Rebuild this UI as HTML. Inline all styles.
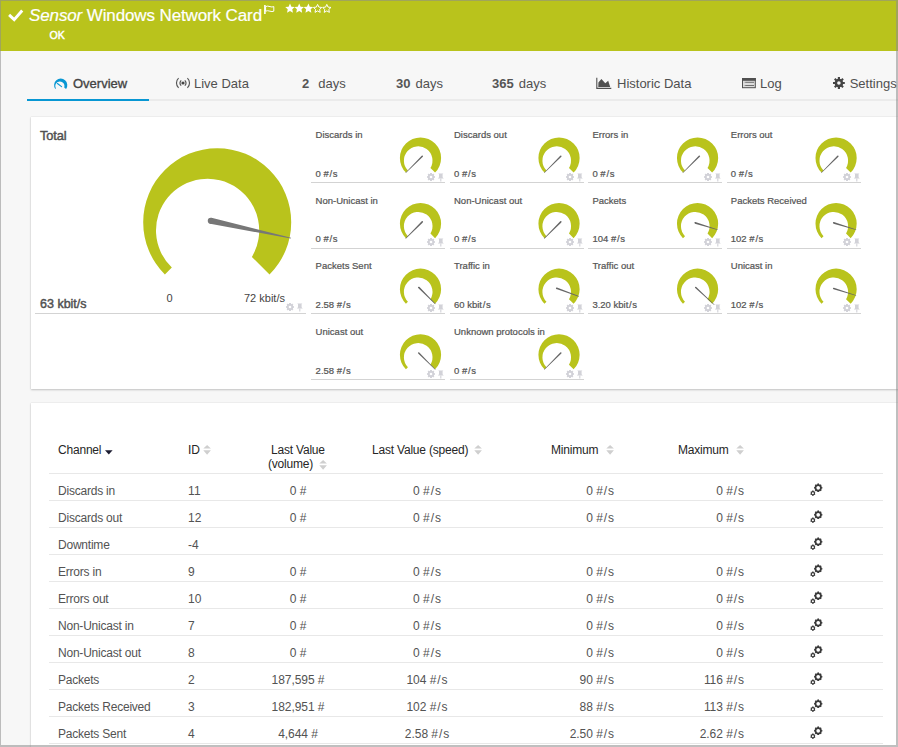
<!DOCTYPE html>
<html><head><meta charset="utf-8"><style>
*{margin:0;padding:0;box-sizing:border-box}
html,body{width:898px;height:747px;overflow:hidden;background:#f7f7f7;font-family:"Liberation Sans",sans-serif}
body{position:relative}
.a{position:absolute;white-space:nowrap;line-height:1}
#frame{position:absolute;left:0;top:0;width:898px;height:747px;border:1px solid rgba(140,140,140,0.56);border-right-width:2px;border-bottom-width:2px;z-index:50}
#hdr{position:absolute;left:0;top:0;width:898px;height:51px;background:#b9c31c}
.tab{font-size:13px;color:#505050}
.panel{position:absolute;background:#fff;box-shadow:0 1px 2px rgba(0,0,0,0.2),0 0 1px rgba(0,0,0,0.16)}
.tl{font-size:9.5px;color:#555;-webkit-text-stroke:0.22px #555}
.hr{position:absolute;height:1px;background:#d3d3d3}
.th{font-size:12px;color:#262626;letter-spacing:-0.2px}
.td{font-size:12px;color:#535353;letter-spacing:-0.22px}
.rl{position:absolute;left:49px;width:834px;height:1px;background:#e8e8e8}
</style></head><body>
<div id="hdr"></div>
<svg class="a" style="left:8px;top:9px" width="16" height="13" viewBox="0 0 16 13"><path d="M1.1 5.9 L6.2 10.6 L14.2 1.5" fill="none" stroke="#fff" stroke-width="2.9"/></svg>
<div class="a" style="left:29px;top:6.6px;font-size:17px;color:#fff;letter-spacing:-0.12px;-webkit-text-stroke:0.2px #fff"><i>Sensor</i> Windows Network Card</div>
<svg class="a" style="left:263px;top:4px" width="13" height="11" viewBox="0 0 13 11"><path d="M1.9 1 V10" stroke="#fff" stroke-width="1.6"/><path d="M2.6 2.6 Q4.5 1.6 7 2.6 Q9 3.4 10.8 2.6 V7.2 Q9 8 7 7.2 Q4.5 6.2 2.6 7.2 Z" fill="none" stroke="#fff" stroke-width="1"/></svg>
<svg class="a" style="left:285px;top:3px" width="48" height="11" viewBox="0 0 48 11"><polygon points="5.00,0.60 6.41,3.66 9.76,4.05 7.28,6.34 7.94,9.65 5.00,8.00 2.06,9.65 2.72,6.34 0.24,4.05 3.59,3.66" fill="#fff"/><polygon points="14.20,0.60 15.61,3.66 18.96,4.05 16.48,6.34 17.14,9.65 14.20,8.00 11.26,9.65 11.92,6.34 9.44,4.05 12.79,3.66" fill="#fff"/><polygon points="23.40,0.60 24.81,3.66 28.16,4.05 25.68,6.34 26.34,9.65 23.40,8.00 20.46,9.65 21.12,6.34 18.64,4.05 21.99,3.66" fill="#fff"/><polygon points="32.60,1.40 33.83,4.10 36.78,4.44 34.60,6.45 35.19,9.36 32.60,7.90 30.01,9.36 30.60,6.45 28.42,4.44 31.37,4.10" fill="none" stroke="#fff" stroke-width="1"/><polygon points="41.80,1.40 43.03,4.10 45.98,4.44 43.80,6.45 44.39,9.36 41.80,7.90 39.21,9.36 39.80,6.45 37.62,4.44 40.57,4.10" fill="none" stroke="#fff" stroke-width="1"/></svg>
<div class="a" style="left:49.5px;top:30px;font-size:10.6px;color:#fff;-webkit-text-stroke:0.45px #fff">OK</div>
<div class="a" style="left:27px;top:99px;width:871px;height:2px;background:#ebebeb"></div>
<div class="a" style="left:27px;top:99px;width:122px;height:2px;background:#0897d3"></div>
<div class="a tab" style="left:73px;top:77px;color:#444;-webkit-text-stroke:0.35px #444">Overview</div>
<svg class="a" style="left:175px;top:77px" width="16" height="12" viewBox="0 0 16 12"><circle cx="8" cy="6" r="1.6" fill="#444"/><path d="M6.2 3.3 A4 4 0 0 0 6.2 8.7 M9.8 3.3 A4 4 0 0 1 9.8 8.7 M3.6 1.2 A6.5 6.5 0 0 0 3.6 10.8 M12.4 1.2 A6.5 6.5 0 0 1 12.4 10.8" fill="none" stroke="#555" stroke-width="1.15"/></svg>
<div class="a tab" style="left:194px;top:77px">Live Data</div>
<div class="a tab" style="left:302px;top:77px"><b style="color:#555">2</b><span style="margin-left:9px">days</span></div>
<div class="a tab" style="left:396px;top:77px"><b style="color:#555">30</b><span style="margin-left:5px">days</span></div>
<div class="a tab" style="left:492px;top:77px"><b style="color:#555">365</b><span style="margin-left:5px">days</span></div>
<svg class="a" style="left:596px;top:77px" width="16" height="12" viewBox="0 0 16 12"><path d="M0.8 0.8 V11.4 H15.3" fill="none" stroke="#505050" stroke-width="1.1"/><path d="M2.3 9.9 L2.4 5.6 L5.4 1.9 L9.3 6.2 L12.2 3.8 L14.2 9.9 Z" fill="#505050"/></svg>
<div class="a tab" style="left:617px;top:77px">Historic Data</div>
<svg class="a" style="left:742px;top:77px" width="14" height="12" viewBox="0 0 14 12"><rect x="0.5" y="1.5" width="12.8" height="9.2" fill="#ddd" stroke="#505050" stroke-width="1"/><rect x="0" y="1" width="13.8" height="2.8" fill="#505050"/><path d="M3.2 5.3 H12 M3.2 8.5 H12" stroke="#707070" stroke-width="1"/><path d="M1.9 5.3 H2.5 M1.9 8.5 H2.5" stroke="#999" stroke-width="1"/></svg>
<div class="a tab" style="left:760px;top:77px">Log</div>
<svg class="a" style="left:832px;top:76px" width="14" height="14" viewBox="0 0 14 14"><circle cx="6.90" cy="7.00" r="4.30" fill="#444"/><rect x="5.90" y="1.10" width="2.00" height="11.80" fill="#444" transform="rotate(0.0 6.90 7.00)"/><rect x="5.90" y="1.10" width="2.00" height="11.80" fill="#444" transform="rotate(45.0 6.90 7.00)"/><rect x="5.90" y="1.10" width="2.00" height="11.80" fill="#444" transform="rotate(90.0 6.90 7.00)"/><rect x="5.90" y="1.10" width="2.00" height="11.80" fill="#444" transform="rotate(135.0 6.90 7.00)"/><rect x="5.90" y="1.10" width="2.00" height="11.80" fill="#444" transform="rotate(180.0 6.90 7.00)"/><circle cx="6.90" cy="7.00" r="1.80" fill="#f7f7f7"/></svg>
<div class="a tab" style="left:849.7px;top:77px">Settings</div>
<div class="panel" style="left:31px;top:117px;width:880px;height:272px"></div>
<svg class="a" style="left:0;top:0" width="898" height="747"><path d="M55.29 88.99 A6.60 6.60 0 1 1 66.11 88.99 L64.34 87.75 A4.70 4.70 0 1 0 55.85 88.59 Z" fill="#0897d3"/><path d="M57.4 83.5 L61.6 86.6" stroke="#0897d3" stroke-width="1.1" stroke-linecap="round"/></svg>
<svg class="a" style="left:0;top:0" width="898" height="747"><path d="M164.87 274.53 A74.00 74.00 0 1 1 269.53 274.53 L251.88 256.88 A51.60 51.60 0 1 0 171.82 267.58 Z" fill="#b9c31c"/><path d="M210.19 223.86 L290.80 238.57 L290.99 237.69 L211.50 217.80 Z M210.85 220.83 m-3.10 0 a3.10 3.10 0 1 0 6.20 0 a3.10 3.10 0 1 0 -6.20 0" fill="#777"/></svg>
<div class="a" style="left:40px;top:130px;font-size:12.8px;color:#505050;-webkit-text-stroke:0.45px #505050;letter-spacing:-0.1px">Total</div>
<div class="a" style="left:40px;top:297.6px;font-size:12.5px;color:#505050;-webkit-text-stroke:0.45px #505050;letter-spacing:0px">63 kbit/s</div>
<div class="a" style="left:166.5px;top:292.5px;font-size:11px;color:#444">0</div>
<div class="a" style="left:244px;top:292.5px;font-size:11px;color:#444">72 kbit/s</div>
<div class="hr" style="left:35px;top:313px;width:271px"></div>
<svg class="a" style="left:285.5px;top:302.5px" width="18" height="9" viewBox="0 0 18 9"><circle cx="4.00" cy="4.00" r="3.20" fill="#d2d2d8"/><rect x="3.20" y="0.00" width="1.60" height="8.00" fill="#d2d2d8" transform="rotate(0.0 4.00 4.00)"/><rect x="3.20" y="0.00" width="1.60" height="8.00" fill="#d2d2d8" transform="rotate(45.0 4.00 4.00)"/><rect x="3.20" y="0.00" width="1.60" height="8.00" fill="#d2d2d8" transform="rotate(90.0 4.00 4.00)"/><rect x="3.20" y="0.00" width="1.60" height="8.00" fill="#d2d2d8" transform="rotate(135.0 4.00 4.00)"/><rect x="3.20" y="0.00" width="1.60" height="8.00" fill="#d2d2d8" transform="rotate(180.0 4.00 4.00)"/><circle cx="4.00" cy="4.00" r="1.30" fill="#fff"/><path d="M11.2 0.5 H16.4 L15.6 1.2 V4.2 L16.8 5.6 H10.8 L12 4.2 V1.2 Z" fill="#d2d2d8"/><path d="M13.8 5.5 V8.5" stroke="#d2d2d8" stroke-width="1.1"/></svg>
<svg class="a" style="left:0;top:0" width="898" height="747"><path d="M405.93 172.57 A20.60 20.60 0 1 1 435.07 172.57 L430.46 167.96 A14.30 14.30 0 1 0 407.94 170.56 Z" fill="#b9c31c"/><path d="M421.70 155.67 L405.44 172.64 L405.86 173.06 L422.83 156.80 Z M422.27 156.23 m-0.80 0 a0.80 0.80 0 1 0 1.60 0 a0.80 0.80 0 1 0 -1.60 0" fill="#666"/><path d="M544.46 172.57 A20.60 20.60 0 1 1 573.60 172.57 L568.99 167.96 A14.30 14.30 0 1 0 546.47 170.56 Z" fill="#b9c31c"/><path d="M560.23 155.67 L543.97 172.64 L544.39 173.06 L561.36 156.80 Z M560.80 156.23 m-0.80 0 a0.80 0.80 0 1 0 1.60 0 a0.80 0.80 0 1 0 -1.60 0" fill="#666"/><path d="M682.99 172.57 A20.60 20.60 0 1 1 712.13 172.57 L707.52 167.96 A14.30 14.30 0 1 0 685.00 170.56 Z" fill="#b9c31c"/><path d="M698.76 155.67 L682.50 172.64 L682.92 173.06 L699.89 156.80 Z M699.33 156.23 m-0.80 0 a0.80 0.80 0 1 0 1.60 0 a0.80 0.80 0 1 0 -1.60 0" fill="#666"/><path d="M821.52 172.57 A20.60 20.60 0 1 1 850.66 172.57 L846.05 167.96 A14.30 14.30 0 1 0 823.53 170.56 Z" fill="#b9c31c"/><path d="M837.29 155.67 L821.03 172.64 L821.45 173.06 L838.42 156.80 Z M837.86 156.23 m-0.80 0 a0.80 0.80 0 1 0 1.60 0 a0.80 0.80 0 1 0 -1.60 0" fill="#666"/><path d="M405.93 238.17 A20.60 20.60 0 1 1 435.07 238.17 L430.46 233.56 A14.30 14.30 0 1 0 407.94 236.16 Z" fill="#b9c31c"/><path d="M421.70 221.27 L405.44 238.24 L405.86 238.66 L422.83 222.40 Z M422.27 221.83 m-0.80 0 a0.80 0.80 0 1 0 1.60 0 a0.80 0.80 0 1 0 -1.60 0" fill="#666"/><path d="M544.46 238.17 A20.60 20.60 0 1 1 573.60 238.17 L568.99 233.56 A14.30 14.30 0 1 0 546.47 236.16 Z" fill="#b9c31c"/><path d="M560.23 221.27 L543.97 238.24 L544.39 238.66 L561.36 222.40 Z M560.80 221.83 m-0.80 0 a0.80 0.80 0 1 0 1.60 0 a0.80 0.80 0 1 0 -1.60 0" fill="#666"/><path d="M682.99 238.17 A20.60 20.60 0 1 1 712.13 238.17 L707.52 233.56 A14.30 14.30 0 1 0 685.00 236.16 Z" fill="#b9c31c"/><path d="M694.94 223.63 L717.55 230.03 L717.73 229.45 L695.40 222.10 Z M695.17 222.87 m-0.80 0 a0.80 0.80 0 1 0 1.60 0 a0.80 0.80 0 1 0 -1.60 0" fill="#666"/><path d="M821.52 238.17 A20.60 20.60 0 1 1 850.66 238.17 L846.05 233.56 A14.30 14.30 0 1 0 823.53 236.16 Z" fill="#b9c31c"/><path d="M833.47 223.63 L856.08 230.03 L856.26 229.45 L833.93 222.10 Z M833.70 222.87 m-0.80 0 a0.80 0.80 0 1 0 1.60 0 a0.80 0.80 0 1 0 -1.60 0" fill="#666"/><path d="M405.93 303.77 A20.60 20.60 0 1 1 435.07 303.77 L430.46 299.16 A14.30 14.30 0 1 0 407.94 301.76 Z" fill="#b9c31c"/><path d="M418.17 288.00 L435.14 304.26 L435.56 303.84 L419.30 286.87 Z M418.73 287.43 m-0.80 0 a0.80 0.80 0 1 0 1.60 0 a0.80 0.80 0 1 0 -1.60 0" fill="#666"/><path d="M544.46 303.77 A20.60 20.60 0 1 1 573.60 303.77 L568.99 299.16 A14.30 14.30 0 1 0 546.47 301.76 Z" fill="#b9c31c"/><path d="M556.41 289.10 L578.66 296.66 L578.87 296.10 L556.95 287.59 Z M556.68 288.34 m-0.80 0 a0.80 0.80 0 1 0 1.60 0 a0.80 0.80 0 1 0 -1.60 0" fill="#666"/><path d="M682.99 303.77 A20.60 20.60 0 1 1 712.13 303.77 L707.52 299.16 A14.30 14.30 0 1 0 685.00 301.76 Z" fill="#b9c31c"/><path d="M695.19 288.08 L714.18 305.11 L714.59 304.67 L696.28 286.91 Z M695.73 287.50 m-0.80 0 a0.80 0.80 0 1 0 1.60 0 a0.80 0.80 0 1 0 -1.60 0" fill="#666"/><path d="M821.52 303.77 A20.60 20.60 0 1 1 850.66 303.77 L846.05 299.16 A14.30 14.30 0 1 0 823.53 301.76 Z" fill="#b9c31c"/><path d="M833.47 289.21 L856.03 295.80 L856.21 295.23 L833.95 287.69 Z M833.71 288.45 m-0.80 0 a0.80 0.80 0 1 0 1.60 0 a0.80 0.80 0 1 0 -1.60 0" fill="#666"/><path d="M405.93 369.37 A20.60 20.60 0 1 1 435.07 369.37 L430.46 364.76 A14.30 14.30 0 1 0 407.94 367.36 Z" fill="#b9c31c"/><path d="M418.17 353.60 L435.14 369.86 L435.56 369.44 L419.30 352.47 Z M418.73 353.03 m-0.80 0 a0.80 0.80 0 1 0 1.60 0 a0.80 0.80 0 1 0 -1.60 0" fill="#666"/><path d="M544.46 369.37 A20.60 20.60 0 1 1 573.60 369.37 L568.99 364.76 A14.30 14.30 0 1 0 546.47 367.36 Z" fill="#b9c31c"/><path d="M560.23 352.47 L543.97 369.44 L544.39 369.86 L561.36 353.60 Z M560.80 353.03 m-0.80 0 a0.80 0.80 0 1 0 1.60 0 a0.80 0.80 0 1 0 -1.60 0" fill="#666"/></svg>
<div class="hr" style="left:311.0px;top:182.2px;width:134px"></div><div class="a tl" style="left:315.6px;top:130.0px">Discards in</div><div class="a tl" style="left:315.6px;top:168.7px">0 #<span style="margin:0 0.6px 0 0.8px">/</span>s</div><svg class="a" style="left:426.8px;top:172.8px" width="18" height="9" viewBox="0 0 18 9"><circle cx="4.00" cy="4.00" r="3.20" fill="#d2d2d8"/><rect x="3.20" y="0.00" width="1.60" height="8.00" fill="#d2d2d8" transform="rotate(0.0 4.00 4.00)"/><rect x="3.20" y="0.00" width="1.60" height="8.00" fill="#d2d2d8" transform="rotate(45.0 4.00 4.00)"/><rect x="3.20" y="0.00" width="1.60" height="8.00" fill="#d2d2d8" transform="rotate(90.0 4.00 4.00)"/><rect x="3.20" y="0.00" width="1.60" height="8.00" fill="#d2d2d8" transform="rotate(135.0 4.00 4.00)"/><rect x="3.20" y="0.00" width="1.60" height="8.00" fill="#d2d2d8" transform="rotate(180.0 4.00 4.00)"/><circle cx="4.00" cy="4.00" r="1.30" fill="#fff"/><path d="M11.2 0.5 H16.4 L15.6 1.2 V4.2 L16.8 5.6 H10.8 L12 4.2 V1.2 Z" fill="#d2d2d8"/><path d="M13.8 5.5 V8.5" stroke="#d2d2d8" stroke-width="1.1"/></svg><div class="hr" style="left:449.7px;top:182.2px;width:134px"></div><div class="a tl" style="left:454.0px;top:130.0px">Discards out</div><div class="a tl" style="left:454.0px;top:168.7px">0 #<span style="margin:0 0.6px 0 0.8px">/</span>s</div><svg class="a" style="left:565.5px;top:172.8px" width="18" height="9" viewBox="0 0 18 9"><circle cx="4.00" cy="4.00" r="3.20" fill="#d2d2d8"/><rect x="3.20" y="0.00" width="1.60" height="8.00" fill="#d2d2d8" transform="rotate(0.0 4.00 4.00)"/><rect x="3.20" y="0.00" width="1.60" height="8.00" fill="#d2d2d8" transform="rotate(45.0 4.00 4.00)"/><rect x="3.20" y="0.00" width="1.60" height="8.00" fill="#d2d2d8" transform="rotate(90.0 4.00 4.00)"/><rect x="3.20" y="0.00" width="1.60" height="8.00" fill="#d2d2d8" transform="rotate(135.0 4.00 4.00)"/><rect x="3.20" y="0.00" width="1.60" height="8.00" fill="#d2d2d8" transform="rotate(180.0 4.00 4.00)"/><circle cx="4.00" cy="4.00" r="1.30" fill="#fff"/><path d="M11.2 0.5 H16.4 L15.6 1.2 V4.2 L16.8 5.6 H10.8 L12 4.2 V1.2 Z" fill="#d2d2d8"/><path d="M13.8 5.5 V8.5" stroke="#d2d2d8" stroke-width="1.1"/></svg><div class="hr" style="left:588.4px;top:182.2px;width:134px"></div><div class="a tl" style="left:592.4px;top:130.0px">Errors in</div><div class="a tl" style="left:592.4px;top:168.7px">0 #<span style="margin:0 0.6px 0 0.8px">/</span>s</div><svg class="a" style="left:704.2px;top:172.8px" width="18" height="9" viewBox="0 0 18 9"><circle cx="4.00" cy="4.00" r="3.20" fill="#d2d2d8"/><rect x="3.20" y="0.00" width="1.60" height="8.00" fill="#d2d2d8" transform="rotate(0.0 4.00 4.00)"/><rect x="3.20" y="0.00" width="1.60" height="8.00" fill="#d2d2d8" transform="rotate(45.0 4.00 4.00)"/><rect x="3.20" y="0.00" width="1.60" height="8.00" fill="#d2d2d8" transform="rotate(90.0 4.00 4.00)"/><rect x="3.20" y="0.00" width="1.60" height="8.00" fill="#d2d2d8" transform="rotate(135.0 4.00 4.00)"/><rect x="3.20" y="0.00" width="1.60" height="8.00" fill="#d2d2d8" transform="rotate(180.0 4.00 4.00)"/><circle cx="4.00" cy="4.00" r="1.30" fill="#fff"/><path d="M11.2 0.5 H16.4 L15.6 1.2 V4.2 L16.8 5.6 H10.8 L12 4.2 V1.2 Z" fill="#d2d2d8"/><path d="M13.8 5.5 V8.5" stroke="#d2d2d8" stroke-width="1.1"/></svg><div class="hr" style="left:727.1px;top:182.2px;width:134px"></div><div class="a tl" style="left:730.8px;top:130.0px">Errors out</div><div class="a tl" style="left:730.8px;top:168.7px">0 #<span style="margin:0 0.6px 0 0.8px">/</span>s</div><svg class="a" style="left:842.9px;top:172.8px" width="18" height="9" viewBox="0 0 18 9"><circle cx="4.00" cy="4.00" r="3.20" fill="#d2d2d8"/><rect x="3.20" y="0.00" width="1.60" height="8.00" fill="#d2d2d8" transform="rotate(0.0 4.00 4.00)"/><rect x="3.20" y="0.00" width="1.60" height="8.00" fill="#d2d2d8" transform="rotate(45.0 4.00 4.00)"/><rect x="3.20" y="0.00" width="1.60" height="8.00" fill="#d2d2d8" transform="rotate(90.0 4.00 4.00)"/><rect x="3.20" y="0.00" width="1.60" height="8.00" fill="#d2d2d8" transform="rotate(135.0 4.00 4.00)"/><rect x="3.20" y="0.00" width="1.60" height="8.00" fill="#d2d2d8" transform="rotate(180.0 4.00 4.00)"/><circle cx="4.00" cy="4.00" r="1.30" fill="#fff"/><path d="M11.2 0.5 H16.4 L15.6 1.2 V4.2 L16.8 5.6 H10.8 L12 4.2 V1.2 Z" fill="#d2d2d8"/><path d="M13.8 5.5 V8.5" stroke="#d2d2d8" stroke-width="1.1"/></svg><div class="hr" style="left:311.0px;top:247.8px;width:134px"></div><div class="a tl" style="left:315.6px;top:195.6px">Non-Unicast in</div><div class="a tl" style="left:315.6px;top:234.3px">0 #<span style="margin:0 0.6px 0 0.8px">/</span>s</div><svg class="a" style="left:426.8px;top:238.4px" width="18" height="9" viewBox="0 0 18 9"><circle cx="4.00" cy="4.00" r="3.20" fill="#d2d2d8"/><rect x="3.20" y="0.00" width="1.60" height="8.00" fill="#d2d2d8" transform="rotate(0.0 4.00 4.00)"/><rect x="3.20" y="0.00" width="1.60" height="8.00" fill="#d2d2d8" transform="rotate(45.0 4.00 4.00)"/><rect x="3.20" y="0.00" width="1.60" height="8.00" fill="#d2d2d8" transform="rotate(90.0 4.00 4.00)"/><rect x="3.20" y="0.00" width="1.60" height="8.00" fill="#d2d2d8" transform="rotate(135.0 4.00 4.00)"/><rect x="3.20" y="0.00" width="1.60" height="8.00" fill="#d2d2d8" transform="rotate(180.0 4.00 4.00)"/><circle cx="4.00" cy="4.00" r="1.30" fill="#fff"/><path d="M11.2 0.5 H16.4 L15.6 1.2 V4.2 L16.8 5.6 H10.8 L12 4.2 V1.2 Z" fill="#d2d2d8"/><path d="M13.8 5.5 V8.5" stroke="#d2d2d8" stroke-width="1.1"/></svg><div class="hr" style="left:449.7px;top:247.8px;width:134px"></div><div class="a tl" style="left:454.0px;top:195.6px">Non-Unicast out</div><div class="a tl" style="left:454.0px;top:234.3px">0 #<span style="margin:0 0.6px 0 0.8px">/</span>s</div><svg class="a" style="left:565.5px;top:238.4px" width="18" height="9" viewBox="0 0 18 9"><circle cx="4.00" cy="4.00" r="3.20" fill="#d2d2d8"/><rect x="3.20" y="0.00" width="1.60" height="8.00" fill="#d2d2d8" transform="rotate(0.0 4.00 4.00)"/><rect x="3.20" y="0.00" width="1.60" height="8.00" fill="#d2d2d8" transform="rotate(45.0 4.00 4.00)"/><rect x="3.20" y="0.00" width="1.60" height="8.00" fill="#d2d2d8" transform="rotate(90.0 4.00 4.00)"/><rect x="3.20" y="0.00" width="1.60" height="8.00" fill="#d2d2d8" transform="rotate(135.0 4.00 4.00)"/><rect x="3.20" y="0.00" width="1.60" height="8.00" fill="#d2d2d8" transform="rotate(180.0 4.00 4.00)"/><circle cx="4.00" cy="4.00" r="1.30" fill="#fff"/><path d="M11.2 0.5 H16.4 L15.6 1.2 V4.2 L16.8 5.6 H10.8 L12 4.2 V1.2 Z" fill="#d2d2d8"/><path d="M13.8 5.5 V8.5" stroke="#d2d2d8" stroke-width="1.1"/></svg><div class="hr" style="left:588.4px;top:247.8px;width:134px"></div><div class="a tl" style="left:592.4px;top:195.6px">Packets</div><div class="a tl" style="left:592.4px;top:234.3px">104 #<span style="margin:0 0.6px 0 0.8px">/</span>s</div><svg class="a" style="left:704.2px;top:238.4px" width="18" height="9" viewBox="0 0 18 9"><circle cx="4.00" cy="4.00" r="3.20" fill="#d2d2d8"/><rect x="3.20" y="0.00" width="1.60" height="8.00" fill="#d2d2d8" transform="rotate(0.0 4.00 4.00)"/><rect x="3.20" y="0.00" width="1.60" height="8.00" fill="#d2d2d8" transform="rotate(45.0 4.00 4.00)"/><rect x="3.20" y="0.00" width="1.60" height="8.00" fill="#d2d2d8" transform="rotate(90.0 4.00 4.00)"/><rect x="3.20" y="0.00" width="1.60" height="8.00" fill="#d2d2d8" transform="rotate(135.0 4.00 4.00)"/><rect x="3.20" y="0.00" width="1.60" height="8.00" fill="#d2d2d8" transform="rotate(180.0 4.00 4.00)"/><circle cx="4.00" cy="4.00" r="1.30" fill="#fff"/><path d="M11.2 0.5 H16.4 L15.6 1.2 V4.2 L16.8 5.6 H10.8 L12 4.2 V1.2 Z" fill="#d2d2d8"/><path d="M13.8 5.5 V8.5" stroke="#d2d2d8" stroke-width="1.1"/></svg><div class="hr" style="left:727.1px;top:247.8px;width:134px"></div><div class="a tl" style="left:730.8px;top:195.6px">Packets Received</div><div class="a tl" style="left:730.8px;top:234.3px">102 #<span style="margin:0 0.6px 0 0.8px">/</span>s</div><svg class="a" style="left:842.9px;top:238.4px" width="18" height="9" viewBox="0 0 18 9"><circle cx="4.00" cy="4.00" r="3.20" fill="#d2d2d8"/><rect x="3.20" y="0.00" width="1.60" height="8.00" fill="#d2d2d8" transform="rotate(0.0 4.00 4.00)"/><rect x="3.20" y="0.00" width="1.60" height="8.00" fill="#d2d2d8" transform="rotate(45.0 4.00 4.00)"/><rect x="3.20" y="0.00" width="1.60" height="8.00" fill="#d2d2d8" transform="rotate(90.0 4.00 4.00)"/><rect x="3.20" y="0.00" width="1.60" height="8.00" fill="#d2d2d8" transform="rotate(135.0 4.00 4.00)"/><rect x="3.20" y="0.00" width="1.60" height="8.00" fill="#d2d2d8" transform="rotate(180.0 4.00 4.00)"/><circle cx="4.00" cy="4.00" r="1.30" fill="#fff"/><path d="M11.2 0.5 H16.4 L15.6 1.2 V4.2 L16.8 5.6 H10.8 L12 4.2 V1.2 Z" fill="#d2d2d8"/><path d="M13.8 5.5 V8.5" stroke="#d2d2d8" stroke-width="1.1"/></svg><div class="hr" style="left:311.0px;top:313.4px;width:134px"></div><div class="a tl" style="left:315.6px;top:261.2px">Packets Sent</div><div class="a tl" style="left:315.6px;top:299.9px">2.58 #<span style="margin:0 0.6px 0 0.8px">/</span>s</div><svg class="a" style="left:426.8px;top:304.0px" width="18" height="9" viewBox="0 0 18 9"><circle cx="4.00" cy="4.00" r="3.20" fill="#d2d2d8"/><rect x="3.20" y="0.00" width="1.60" height="8.00" fill="#d2d2d8" transform="rotate(0.0 4.00 4.00)"/><rect x="3.20" y="0.00" width="1.60" height="8.00" fill="#d2d2d8" transform="rotate(45.0 4.00 4.00)"/><rect x="3.20" y="0.00" width="1.60" height="8.00" fill="#d2d2d8" transform="rotate(90.0 4.00 4.00)"/><rect x="3.20" y="0.00" width="1.60" height="8.00" fill="#d2d2d8" transform="rotate(135.0 4.00 4.00)"/><rect x="3.20" y="0.00" width="1.60" height="8.00" fill="#d2d2d8" transform="rotate(180.0 4.00 4.00)"/><circle cx="4.00" cy="4.00" r="1.30" fill="#fff"/><path d="M11.2 0.5 H16.4 L15.6 1.2 V4.2 L16.8 5.6 H10.8 L12 4.2 V1.2 Z" fill="#d2d2d8"/><path d="M13.8 5.5 V8.5" stroke="#d2d2d8" stroke-width="1.1"/></svg><div class="hr" style="left:449.7px;top:313.4px;width:134px"></div><div class="a tl" style="left:454.0px;top:261.2px">Traffic in</div><div class="a tl" style="left:454.0px;top:299.9px">60 kbit<span style="margin:0 0.6px 0 0.8px">/</span>s</div><svg class="a" style="left:565.5px;top:304.0px" width="18" height="9" viewBox="0 0 18 9"><circle cx="4.00" cy="4.00" r="3.20" fill="#d2d2d8"/><rect x="3.20" y="0.00" width="1.60" height="8.00" fill="#d2d2d8" transform="rotate(0.0 4.00 4.00)"/><rect x="3.20" y="0.00" width="1.60" height="8.00" fill="#d2d2d8" transform="rotate(45.0 4.00 4.00)"/><rect x="3.20" y="0.00" width="1.60" height="8.00" fill="#d2d2d8" transform="rotate(90.0 4.00 4.00)"/><rect x="3.20" y="0.00" width="1.60" height="8.00" fill="#d2d2d8" transform="rotate(135.0 4.00 4.00)"/><rect x="3.20" y="0.00" width="1.60" height="8.00" fill="#d2d2d8" transform="rotate(180.0 4.00 4.00)"/><circle cx="4.00" cy="4.00" r="1.30" fill="#fff"/><path d="M11.2 0.5 H16.4 L15.6 1.2 V4.2 L16.8 5.6 H10.8 L12 4.2 V1.2 Z" fill="#d2d2d8"/><path d="M13.8 5.5 V8.5" stroke="#d2d2d8" stroke-width="1.1"/></svg><div class="hr" style="left:588.4px;top:313.4px;width:134px"></div><div class="a tl" style="left:592.4px;top:261.2px">Traffic out</div><div class="a tl" style="left:592.4px;top:299.9px">3.20 kbit<span style="margin:0 0.6px 0 0.8px">/</span>s</div><svg class="a" style="left:704.2px;top:304.0px" width="18" height="9" viewBox="0 0 18 9"><circle cx="4.00" cy="4.00" r="3.20" fill="#d2d2d8"/><rect x="3.20" y="0.00" width="1.60" height="8.00" fill="#d2d2d8" transform="rotate(0.0 4.00 4.00)"/><rect x="3.20" y="0.00" width="1.60" height="8.00" fill="#d2d2d8" transform="rotate(45.0 4.00 4.00)"/><rect x="3.20" y="0.00" width="1.60" height="8.00" fill="#d2d2d8" transform="rotate(90.0 4.00 4.00)"/><rect x="3.20" y="0.00" width="1.60" height="8.00" fill="#d2d2d8" transform="rotate(135.0 4.00 4.00)"/><rect x="3.20" y="0.00" width="1.60" height="8.00" fill="#d2d2d8" transform="rotate(180.0 4.00 4.00)"/><circle cx="4.00" cy="4.00" r="1.30" fill="#fff"/><path d="M11.2 0.5 H16.4 L15.6 1.2 V4.2 L16.8 5.6 H10.8 L12 4.2 V1.2 Z" fill="#d2d2d8"/><path d="M13.8 5.5 V8.5" stroke="#d2d2d8" stroke-width="1.1"/></svg><div class="hr" style="left:727.1px;top:313.4px;width:134px"></div><div class="a tl" style="left:730.8px;top:261.2px">Unicast in</div><div class="a tl" style="left:730.8px;top:299.9px">102 #<span style="margin:0 0.6px 0 0.8px">/</span>s</div><svg class="a" style="left:842.9px;top:304.0px" width="18" height="9" viewBox="0 0 18 9"><circle cx="4.00" cy="4.00" r="3.20" fill="#d2d2d8"/><rect x="3.20" y="0.00" width="1.60" height="8.00" fill="#d2d2d8" transform="rotate(0.0 4.00 4.00)"/><rect x="3.20" y="0.00" width="1.60" height="8.00" fill="#d2d2d8" transform="rotate(45.0 4.00 4.00)"/><rect x="3.20" y="0.00" width="1.60" height="8.00" fill="#d2d2d8" transform="rotate(90.0 4.00 4.00)"/><rect x="3.20" y="0.00" width="1.60" height="8.00" fill="#d2d2d8" transform="rotate(135.0 4.00 4.00)"/><rect x="3.20" y="0.00" width="1.60" height="8.00" fill="#d2d2d8" transform="rotate(180.0 4.00 4.00)"/><circle cx="4.00" cy="4.00" r="1.30" fill="#fff"/><path d="M11.2 0.5 H16.4 L15.6 1.2 V4.2 L16.8 5.6 H10.8 L12 4.2 V1.2 Z" fill="#d2d2d8"/><path d="M13.8 5.5 V8.5" stroke="#d2d2d8" stroke-width="1.1"/></svg><div class="hr" style="left:311.0px;top:379.0px;width:134px"></div><div class="a tl" style="left:315.6px;top:326.8px">Unicast out</div><div class="a tl" style="left:315.6px;top:365.5px">2.58 #<span style="margin:0 0.6px 0 0.8px">/</span>s</div><svg class="a" style="left:426.8px;top:369.6px" width="18" height="9" viewBox="0 0 18 9"><circle cx="4.00" cy="4.00" r="3.20" fill="#d2d2d8"/><rect x="3.20" y="0.00" width="1.60" height="8.00" fill="#d2d2d8" transform="rotate(0.0 4.00 4.00)"/><rect x="3.20" y="0.00" width="1.60" height="8.00" fill="#d2d2d8" transform="rotate(45.0 4.00 4.00)"/><rect x="3.20" y="0.00" width="1.60" height="8.00" fill="#d2d2d8" transform="rotate(90.0 4.00 4.00)"/><rect x="3.20" y="0.00" width="1.60" height="8.00" fill="#d2d2d8" transform="rotate(135.0 4.00 4.00)"/><rect x="3.20" y="0.00" width="1.60" height="8.00" fill="#d2d2d8" transform="rotate(180.0 4.00 4.00)"/><circle cx="4.00" cy="4.00" r="1.30" fill="#fff"/><path d="M11.2 0.5 H16.4 L15.6 1.2 V4.2 L16.8 5.6 H10.8 L12 4.2 V1.2 Z" fill="#d2d2d8"/><path d="M13.8 5.5 V8.5" stroke="#d2d2d8" stroke-width="1.1"/></svg><div class="hr" style="left:449.7px;top:379.0px;width:134px"></div><div class="a tl" style="left:454.0px;top:326.8px">Unknown protocols in</div><div class="a tl" style="left:454.0px;top:365.5px">0 #<span style="margin:0 0.6px 0 0.8px">/</span>s</div><svg class="a" style="left:565.5px;top:369.6px" width="18" height="9" viewBox="0 0 18 9"><circle cx="4.00" cy="4.00" r="3.20" fill="#d2d2d8"/><rect x="3.20" y="0.00" width="1.60" height="8.00" fill="#d2d2d8" transform="rotate(0.0 4.00 4.00)"/><rect x="3.20" y="0.00" width="1.60" height="8.00" fill="#d2d2d8" transform="rotate(45.0 4.00 4.00)"/><rect x="3.20" y="0.00" width="1.60" height="8.00" fill="#d2d2d8" transform="rotate(90.0 4.00 4.00)"/><rect x="3.20" y="0.00" width="1.60" height="8.00" fill="#d2d2d8" transform="rotate(135.0 4.00 4.00)"/><rect x="3.20" y="0.00" width="1.60" height="8.00" fill="#d2d2d8" transform="rotate(180.0 4.00 4.00)"/><circle cx="4.00" cy="4.00" r="1.30" fill="#fff"/><path d="M11.2 0.5 H16.4 L15.6 1.2 V4.2 L16.8 5.6 H10.8 L12 4.2 V1.2 Z" fill="#d2d2d8"/><path d="M13.8 5.5 V8.5" stroke="#d2d2d8" stroke-width="1.1"/></svg>
<div class="panel" style="left:31px;top:403px;width:880px;height:360px"></div>
<div class="a th" style="left:58px;top:444px">Channel</div>
<svg class="a" style="left:105px;top:450px" width="8" height="5" viewBox="0 0 8 5"><path d="M0 0.3 H7.6 L3.8 4.6 Z" fill="#1c1c30"/></svg>
<div class="a th" style="left:188px;top:444px">ID</div>
<svg class="a" style="left:203.2px;top:444.0px" width="9" height="11" viewBox="0 0 9 11"><path d="M0.3 4.6 L4.1 0.9 L7.9 4.6 Z M0.3 6.3 L4.1 10.7 L7.9 6.3 Z" fill="#cfcfcf"/></svg>
<div class="a th" style="left:271px;top:444px">Last Value</div>
<div class="a th" style="left:268px;top:458px">(volume)</div>
<svg class="a" style="left:319.0px;top:459.0px" width="9" height="11" viewBox="0 0 9 11"><path d="M0.3 4.6 L4.1 0.9 L7.9 4.6 Z M0.3 6.3 L4.1 10.7 L7.9 6.3 Z" fill="#cfcfcf"/></svg>
<div class="a th" style="left:372px;top:444px">Last Value (speed)</div>
<svg class="a" style="left:474.2px;top:444.0px" width="9" height="11" viewBox="0 0 9 11"><path d="M0.3 4.6 L4.1 0.9 L7.9 4.6 Z M0.3 6.3 L4.1 10.7 L7.9 6.3 Z" fill="#cfcfcf"/></svg>
<div class="a th" style="left:551px;top:444px">Minimum</div>
<svg class="a" style="left:605.7px;top:444.0px" width="9" height="11" viewBox="0 0 9 11"><path d="M0.3 4.6 L4.1 0.9 L7.9 4.6 Z M0.3 6.3 L4.1 10.7 L7.9 6.3 Z" fill="#cfcfcf"/></svg>
<div class="a th" style="left:678px;top:444px">Maximum</div>
<svg class="a" style="left:735.7px;top:444.0px" width="9" height="11" viewBox="0 0 9 11"><path d="M0.3 4.6 L4.1 0.9 L7.9 4.6 Z M0.3 6.3 L4.1 10.7 L7.9 6.3 Z" fill="#cfcfcf"/></svg>
<div class="rl" style="top:473px"></div>
<div class="a td" style="left:58px;top:485px">Discards in</div>
<div class="a td" style="left:188px;top:485px;letter-spacing:0.1px">11</div>
<div class="a td" style="left:248px;width:100px;text-align:center;letter-spacing:-0.05px;top:485px">0 #</div>
<div class="a td" style="left:377px;width:100px;text-align:center;letter-spacing:-0.05px;top:485px">0 #<span style="margin:0 0.9px 0 1.1px">/</span>s</div>
<div class="a td" style="left:514px;width:100px;text-align:right;letter-spacing:-0.05px;top:485px">0 #<span style="margin:0 0.9px 0 1.1px">/</span>s</div>
<div class="a td" style="left:644px;width:100px;text-align:right;letter-spacing:-0.05px;top:485px">0 #<span style="margin:0 0.9px 0 1.1px">/</span>s</div>
<svg class="a" style="left:809.1px;top:483.0px" width="14" height="14" viewBox="0 0 14 14"><circle cx="9.20" cy="4.80" r="3.60" fill="#3a3a3a"/><rect x="8.55" y="0.60" width="1.30" height="8.40" fill="#3a3a3a" transform="rotate(0.0 9.20 4.80)"/><rect x="8.55" y="0.60" width="1.30" height="8.40" fill="#3a3a3a" transform="rotate(45.0 9.20 4.80)"/><rect x="8.55" y="0.60" width="1.30" height="8.40" fill="#3a3a3a" transform="rotate(90.0 9.20 4.80)"/><rect x="8.55" y="0.60" width="1.30" height="8.40" fill="#3a3a3a" transform="rotate(135.0 9.20 4.80)"/><rect x="8.55" y="0.60" width="1.30" height="8.40" fill="#3a3a3a" transform="rotate(180.0 9.20 4.80)"/><circle cx="9.20" cy="4.80" r="1.85" fill="#fff"/><circle cx="3.90" cy="10.20" r="2.10" fill="#3a3a3a"/><rect x="3.40" y="7.60" width="1.00" height="5.20" fill="#3a3a3a" transform="rotate(0.0 3.90 10.20)"/><rect x="3.40" y="7.60" width="1.00" height="5.20" fill="#3a3a3a" transform="rotate(60.0 3.90 10.20)"/><rect x="3.40" y="7.60" width="1.00" height="5.20" fill="#3a3a3a" transform="rotate(120.0 3.90 10.20)"/><rect x="3.40" y="7.60" width="1.00" height="5.20" fill="#3a3a3a" transform="rotate(180.0 3.90 10.20)"/><circle cx="3.90" cy="10.20" r="1.00" fill="#fff"/></svg>
<div class="rl" style="top:500px"></div>
<div class="a td" style="left:58px;top:512px">Discards out</div>
<div class="a td" style="left:188px;top:512px;letter-spacing:0.1px">12</div>
<div class="a td" style="left:248px;width:100px;text-align:center;letter-spacing:-0.05px;top:512px">0 #</div>
<div class="a td" style="left:377px;width:100px;text-align:center;letter-spacing:-0.05px;top:512px">0 #<span style="margin:0 0.9px 0 1.1px">/</span>s</div>
<div class="a td" style="left:514px;width:100px;text-align:right;letter-spacing:-0.05px;top:512px">0 #<span style="margin:0 0.9px 0 1.1px">/</span>s</div>
<div class="a td" style="left:644px;width:100px;text-align:right;letter-spacing:-0.05px;top:512px">0 #<span style="margin:0 0.9px 0 1.1px">/</span>s</div>
<svg class="a" style="left:809.1px;top:510.0px" width="14" height="14" viewBox="0 0 14 14"><circle cx="9.20" cy="4.80" r="3.60" fill="#3a3a3a"/><rect x="8.55" y="0.60" width="1.30" height="8.40" fill="#3a3a3a" transform="rotate(0.0 9.20 4.80)"/><rect x="8.55" y="0.60" width="1.30" height="8.40" fill="#3a3a3a" transform="rotate(45.0 9.20 4.80)"/><rect x="8.55" y="0.60" width="1.30" height="8.40" fill="#3a3a3a" transform="rotate(90.0 9.20 4.80)"/><rect x="8.55" y="0.60" width="1.30" height="8.40" fill="#3a3a3a" transform="rotate(135.0 9.20 4.80)"/><rect x="8.55" y="0.60" width="1.30" height="8.40" fill="#3a3a3a" transform="rotate(180.0 9.20 4.80)"/><circle cx="9.20" cy="4.80" r="1.85" fill="#fff"/><circle cx="3.90" cy="10.20" r="2.10" fill="#3a3a3a"/><rect x="3.40" y="7.60" width="1.00" height="5.20" fill="#3a3a3a" transform="rotate(0.0 3.90 10.20)"/><rect x="3.40" y="7.60" width="1.00" height="5.20" fill="#3a3a3a" transform="rotate(60.0 3.90 10.20)"/><rect x="3.40" y="7.60" width="1.00" height="5.20" fill="#3a3a3a" transform="rotate(120.0 3.90 10.20)"/><rect x="3.40" y="7.60" width="1.00" height="5.20" fill="#3a3a3a" transform="rotate(180.0 3.90 10.20)"/><circle cx="3.90" cy="10.20" r="1.00" fill="#fff"/></svg>
<div class="rl" style="top:527px"></div>
<div class="a td" style="left:58px;top:539px">Downtime</div>
<div class="a td" style="left:188px;top:539px;letter-spacing:0.1px">-4</div>
<div class="a td" style="left:248px;width:100px;text-align:center;letter-spacing:-0.05px;top:539px"></div>
<div class="a td" style="left:377px;width:100px;text-align:center;letter-spacing:-0.05px;top:539px"></div>
<div class="a td" style="left:514px;width:100px;text-align:right;letter-spacing:-0.05px;top:539px"></div>
<div class="a td" style="left:644px;width:100px;text-align:right;letter-spacing:-0.05px;top:539px"></div>
<svg class="a" style="left:809.1px;top:537.0px" width="14" height="14" viewBox="0 0 14 14"><circle cx="9.20" cy="4.80" r="3.60" fill="#3a3a3a"/><rect x="8.55" y="0.60" width="1.30" height="8.40" fill="#3a3a3a" transform="rotate(0.0 9.20 4.80)"/><rect x="8.55" y="0.60" width="1.30" height="8.40" fill="#3a3a3a" transform="rotate(45.0 9.20 4.80)"/><rect x="8.55" y="0.60" width="1.30" height="8.40" fill="#3a3a3a" transform="rotate(90.0 9.20 4.80)"/><rect x="8.55" y="0.60" width="1.30" height="8.40" fill="#3a3a3a" transform="rotate(135.0 9.20 4.80)"/><rect x="8.55" y="0.60" width="1.30" height="8.40" fill="#3a3a3a" transform="rotate(180.0 9.20 4.80)"/><circle cx="9.20" cy="4.80" r="1.85" fill="#fff"/><circle cx="3.90" cy="10.20" r="2.10" fill="#3a3a3a"/><rect x="3.40" y="7.60" width="1.00" height="5.20" fill="#3a3a3a" transform="rotate(0.0 3.90 10.20)"/><rect x="3.40" y="7.60" width="1.00" height="5.20" fill="#3a3a3a" transform="rotate(60.0 3.90 10.20)"/><rect x="3.40" y="7.60" width="1.00" height="5.20" fill="#3a3a3a" transform="rotate(120.0 3.90 10.20)"/><rect x="3.40" y="7.60" width="1.00" height="5.20" fill="#3a3a3a" transform="rotate(180.0 3.90 10.20)"/><circle cx="3.90" cy="10.20" r="1.00" fill="#fff"/></svg>
<div class="rl" style="top:554px"></div>
<div class="a td" style="left:58px;top:566px">Errors in</div>
<div class="a td" style="left:188px;top:566px;letter-spacing:0.1px">9</div>
<div class="a td" style="left:248px;width:100px;text-align:center;letter-spacing:-0.05px;top:566px">0 #</div>
<div class="a td" style="left:377px;width:100px;text-align:center;letter-spacing:-0.05px;top:566px">0 #<span style="margin:0 0.9px 0 1.1px">/</span>s</div>
<div class="a td" style="left:514px;width:100px;text-align:right;letter-spacing:-0.05px;top:566px">0 #<span style="margin:0 0.9px 0 1.1px">/</span>s</div>
<div class="a td" style="left:644px;width:100px;text-align:right;letter-spacing:-0.05px;top:566px">0 #<span style="margin:0 0.9px 0 1.1px">/</span>s</div>
<svg class="a" style="left:809.1px;top:564.0px" width="14" height="14" viewBox="0 0 14 14"><circle cx="9.20" cy="4.80" r="3.60" fill="#3a3a3a"/><rect x="8.55" y="0.60" width="1.30" height="8.40" fill="#3a3a3a" transform="rotate(0.0 9.20 4.80)"/><rect x="8.55" y="0.60" width="1.30" height="8.40" fill="#3a3a3a" transform="rotate(45.0 9.20 4.80)"/><rect x="8.55" y="0.60" width="1.30" height="8.40" fill="#3a3a3a" transform="rotate(90.0 9.20 4.80)"/><rect x="8.55" y="0.60" width="1.30" height="8.40" fill="#3a3a3a" transform="rotate(135.0 9.20 4.80)"/><rect x="8.55" y="0.60" width="1.30" height="8.40" fill="#3a3a3a" transform="rotate(180.0 9.20 4.80)"/><circle cx="9.20" cy="4.80" r="1.85" fill="#fff"/><circle cx="3.90" cy="10.20" r="2.10" fill="#3a3a3a"/><rect x="3.40" y="7.60" width="1.00" height="5.20" fill="#3a3a3a" transform="rotate(0.0 3.90 10.20)"/><rect x="3.40" y="7.60" width="1.00" height="5.20" fill="#3a3a3a" transform="rotate(60.0 3.90 10.20)"/><rect x="3.40" y="7.60" width="1.00" height="5.20" fill="#3a3a3a" transform="rotate(120.0 3.90 10.20)"/><rect x="3.40" y="7.60" width="1.00" height="5.20" fill="#3a3a3a" transform="rotate(180.0 3.90 10.20)"/><circle cx="3.90" cy="10.20" r="1.00" fill="#fff"/></svg>
<div class="rl" style="top:581px"></div>
<div class="a td" style="left:58px;top:593px">Errors out</div>
<div class="a td" style="left:188px;top:593px;letter-spacing:0.1px">10</div>
<div class="a td" style="left:248px;width:100px;text-align:center;letter-spacing:-0.05px;top:593px">0 #</div>
<div class="a td" style="left:377px;width:100px;text-align:center;letter-spacing:-0.05px;top:593px">0 #<span style="margin:0 0.9px 0 1.1px">/</span>s</div>
<div class="a td" style="left:514px;width:100px;text-align:right;letter-spacing:-0.05px;top:593px">0 #<span style="margin:0 0.9px 0 1.1px">/</span>s</div>
<div class="a td" style="left:644px;width:100px;text-align:right;letter-spacing:-0.05px;top:593px">0 #<span style="margin:0 0.9px 0 1.1px">/</span>s</div>
<svg class="a" style="left:809.1px;top:591.0px" width="14" height="14" viewBox="0 0 14 14"><circle cx="9.20" cy="4.80" r="3.60" fill="#3a3a3a"/><rect x="8.55" y="0.60" width="1.30" height="8.40" fill="#3a3a3a" transform="rotate(0.0 9.20 4.80)"/><rect x="8.55" y="0.60" width="1.30" height="8.40" fill="#3a3a3a" transform="rotate(45.0 9.20 4.80)"/><rect x="8.55" y="0.60" width="1.30" height="8.40" fill="#3a3a3a" transform="rotate(90.0 9.20 4.80)"/><rect x="8.55" y="0.60" width="1.30" height="8.40" fill="#3a3a3a" transform="rotate(135.0 9.20 4.80)"/><rect x="8.55" y="0.60" width="1.30" height="8.40" fill="#3a3a3a" transform="rotate(180.0 9.20 4.80)"/><circle cx="9.20" cy="4.80" r="1.85" fill="#fff"/><circle cx="3.90" cy="10.20" r="2.10" fill="#3a3a3a"/><rect x="3.40" y="7.60" width="1.00" height="5.20" fill="#3a3a3a" transform="rotate(0.0 3.90 10.20)"/><rect x="3.40" y="7.60" width="1.00" height="5.20" fill="#3a3a3a" transform="rotate(60.0 3.90 10.20)"/><rect x="3.40" y="7.60" width="1.00" height="5.20" fill="#3a3a3a" transform="rotate(120.0 3.90 10.20)"/><rect x="3.40" y="7.60" width="1.00" height="5.20" fill="#3a3a3a" transform="rotate(180.0 3.90 10.20)"/><circle cx="3.90" cy="10.20" r="1.00" fill="#fff"/></svg>
<div class="rl" style="top:608px"></div>
<div class="a td" style="left:58px;top:620px">Non-Unicast in</div>
<div class="a td" style="left:188px;top:620px;letter-spacing:0.1px">7</div>
<div class="a td" style="left:248px;width:100px;text-align:center;letter-spacing:-0.05px;top:620px">0 #</div>
<div class="a td" style="left:377px;width:100px;text-align:center;letter-spacing:-0.05px;top:620px">0 #<span style="margin:0 0.9px 0 1.1px">/</span>s</div>
<div class="a td" style="left:514px;width:100px;text-align:right;letter-spacing:-0.05px;top:620px">0 #<span style="margin:0 0.9px 0 1.1px">/</span>s</div>
<div class="a td" style="left:644px;width:100px;text-align:right;letter-spacing:-0.05px;top:620px">0 #<span style="margin:0 0.9px 0 1.1px">/</span>s</div>
<svg class="a" style="left:809.1px;top:618.0px" width="14" height="14" viewBox="0 0 14 14"><circle cx="9.20" cy="4.80" r="3.60" fill="#3a3a3a"/><rect x="8.55" y="0.60" width="1.30" height="8.40" fill="#3a3a3a" transform="rotate(0.0 9.20 4.80)"/><rect x="8.55" y="0.60" width="1.30" height="8.40" fill="#3a3a3a" transform="rotate(45.0 9.20 4.80)"/><rect x="8.55" y="0.60" width="1.30" height="8.40" fill="#3a3a3a" transform="rotate(90.0 9.20 4.80)"/><rect x="8.55" y="0.60" width="1.30" height="8.40" fill="#3a3a3a" transform="rotate(135.0 9.20 4.80)"/><rect x="8.55" y="0.60" width="1.30" height="8.40" fill="#3a3a3a" transform="rotate(180.0 9.20 4.80)"/><circle cx="9.20" cy="4.80" r="1.85" fill="#fff"/><circle cx="3.90" cy="10.20" r="2.10" fill="#3a3a3a"/><rect x="3.40" y="7.60" width="1.00" height="5.20" fill="#3a3a3a" transform="rotate(0.0 3.90 10.20)"/><rect x="3.40" y="7.60" width="1.00" height="5.20" fill="#3a3a3a" transform="rotate(60.0 3.90 10.20)"/><rect x="3.40" y="7.60" width="1.00" height="5.20" fill="#3a3a3a" transform="rotate(120.0 3.90 10.20)"/><rect x="3.40" y="7.60" width="1.00" height="5.20" fill="#3a3a3a" transform="rotate(180.0 3.90 10.20)"/><circle cx="3.90" cy="10.20" r="1.00" fill="#fff"/></svg>
<div class="rl" style="top:635px"></div>
<div class="a td" style="left:58px;top:647px">Non-Unicast out</div>
<div class="a td" style="left:188px;top:647px;letter-spacing:0.1px">8</div>
<div class="a td" style="left:248px;width:100px;text-align:center;letter-spacing:-0.05px;top:647px">0 #</div>
<div class="a td" style="left:377px;width:100px;text-align:center;letter-spacing:-0.05px;top:647px">0 #<span style="margin:0 0.9px 0 1.1px">/</span>s</div>
<div class="a td" style="left:514px;width:100px;text-align:right;letter-spacing:-0.05px;top:647px">0 #<span style="margin:0 0.9px 0 1.1px">/</span>s</div>
<div class="a td" style="left:644px;width:100px;text-align:right;letter-spacing:-0.05px;top:647px">0 #<span style="margin:0 0.9px 0 1.1px">/</span>s</div>
<svg class="a" style="left:809.1px;top:645.0px" width="14" height="14" viewBox="0 0 14 14"><circle cx="9.20" cy="4.80" r="3.60" fill="#3a3a3a"/><rect x="8.55" y="0.60" width="1.30" height="8.40" fill="#3a3a3a" transform="rotate(0.0 9.20 4.80)"/><rect x="8.55" y="0.60" width="1.30" height="8.40" fill="#3a3a3a" transform="rotate(45.0 9.20 4.80)"/><rect x="8.55" y="0.60" width="1.30" height="8.40" fill="#3a3a3a" transform="rotate(90.0 9.20 4.80)"/><rect x="8.55" y="0.60" width="1.30" height="8.40" fill="#3a3a3a" transform="rotate(135.0 9.20 4.80)"/><rect x="8.55" y="0.60" width="1.30" height="8.40" fill="#3a3a3a" transform="rotate(180.0 9.20 4.80)"/><circle cx="9.20" cy="4.80" r="1.85" fill="#fff"/><circle cx="3.90" cy="10.20" r="2.10" fill="#3a3a3a"/><rect x="3.40" y="7.60" width="1.00" height="5.20" fill="#3a3a3a" transform="rotate(0.0 3.90 10.20)"/><rect x="3.40" y="7.60" width="1.00" height="5.20" fill="#3a3a3a" transform="rotate(60.0 3.90 10.20)"/><rect x="3.40" y="7.60" width="1.00" height="5.20" fill="#3a3a3a" transform="rotate(120.0 3.90 10.20)"/><rect x="3.40" y="7.60" width="1.00" height="5.20" fill="#3a3a3a" transform="rotate(180.0 3.90 10.20)"/><circle cx="3.90" cy="10.20" r="1.00" fill="#fff"/></svg>
<div class="rl" style="top:662px"></div>
<div class="a td" style="left:58px;top:674px">Packets</div>
<div class="a td" style="left:188px;top:674px;letter-spacing:0.1px">2</div>
<div class="a td" style="left:248px;width:100px;text-align:center;letter-spacing:-0.05px;top:674px">187,595 #</div>
<div class="a td" style="left:377px;width:100px;text-align:center;letter-spacing:-0.05px;top:674px">104 #<span style="margin:0 0.9px 0 1.1px">/</span>s</div>
<div class="a td" style="left:514px;width:100px;text-align:right;letter-spacing:-0.05px;top:674px">90 #<span style="margin:0 0.9px 0 1.1px">/</span>s</div>
<div class="a td" style="left:644px;width:100px;text-align:right;letter-spacing:-0.05px;top:674px">116 #<span style="margin:0 0.9px 0 1.1px">/</span>s</div>
<svg class="a" style="left:809.1px;top:672.0px" width="14" height="14" viewBox="0 0 14 14"><circle cx="9.20" cy="4.80" r="3.60" fill="#3a3a3a"/><rect x="8.55" y="0.60" width="1.30" height="8.40" fill="#3a3a3a" transform="rotate(0.0 9.20 4.80)"/><rect x="8.55" y="0.60" width="1.30" height="8.40" fill="#3a3a3a" transform="rotate(45.0 9.20 4.80)"/><rect x="8.55" y="0.60" width="1.30" height="8.40" fill="#3a3a3a" transform="rotate(90.0 9.20 4.80)"/><rect x="8.55" y="0.60" width="1.30" height="8.40" fill="#3a3a3a" transform="rotate(135.0 9.20 4.80)"/><rect x="8.55" y="0.60" width="1.30" height="8.40" fill="#3a3a3a" transform="rotate(180.0 9.20 4.80)"/><circle cx="9.20" cy="4.80" r="1.85" fill="#fff"/><circle cx="3.90" cy="10.20" r="2.10" fill="#3a3a3a"/><rect x="3.40" y="7.60" width="1.00" height="5.20" fill="#3a3a3a" transform="rotate(0.0 3.90 10.20)"/><rect x="3.40" y="7.60" width="1.00" height="5.20" fill="#3a3a3a" transform="rotate(60.0 3.90 10.20)"/><rect x="3.40" y="7.60" width="1.00" height="5.20" fill="#3a3a3a" transform="rotate(120.0 3.90 10.20)"/><rect x="3.40" y="7.60" width="1.00" height="5.20" fill="#3a3a3a" transform="rotate(180.0 3.90 10.20)"/><circle cx="3.90" cy="10.20" r="1.00" fill="#fff"/></svg>
<div class="rl" style="top:689px"></div>
<div class="a td" style="left:58px;top:701px">Packets Received</div>
<div class="a td" style="left:188px;top:701px;letter-spacing:0.1px">3</div>
<div class="a td" style="left:248px;width:100px;text-align:center;letter-spacing:-0.05px;top:701px">182,951 #</div>
<div class="a td" style="left:377px;width:100px;text-align:center;letter-spacing:-0.05px;top:701px">102 #<span style="margin:0 0.9px 0 1.1px">/</span>s</div>
<div class="a td" style="left:514px;width:100px;text-align:right;letter-spacing:-0.05px;top:701px">88 #<span style="margin:0 0.9px 0 1.1px">/</span>s</div>
<div class="a td" style="left:644px;width:100px;text-align:right;letter-spacing:-0.05px;top:701px">113 #<span style="margin:0 0.9px 0 1.1px">/</span>s</div>
<svg class="a" style="left:809.1px;top:699.0px" width="14" height="14" viewBox="0 0 14 14"><circle cx="9.20" cy="4.80" r="3.60" fill="#3a3a3a"/><rect x="8.55" y="0.60" width="1.30" height="8.40" fill="#3a3a3a" transform="rotate(0.0 9.20 4.80)"/><rect x="8.55" y="0.60" width="1.30" height="8.40" fill="#3a3a3a" transform="rotate(45.0 9.20 4.80)"/><rect x="8.55" y="0.60" width="1.30" height="8.40" fill="#3a3a3a" transform="rotate(90.0 9.20 4.80)"/><rect x="8.55" y="0.60" width="1.30" height="8.40" fill="#3a3a3a" transform="rotate(135.0 9.20 4.80)"/><rect x="8.55" y="0.60" width="1.30" height="8.40" fill="#3a3a3a" transform="rotate(180.0 9.20 4.80)"/><circle cx="9.20" cy="4.80" r="1.85" fill="#fff"/><circle cx="3.90" cy="10.20" r="2.10" fill="#3a3a3a"/><rect x="3.40" y="7.60" width="1.00" height="5.20" fill="#3a3a3a" transform="rotate(0.0 3.90 10.20)"/><rect x="3.40" y="7.60" width="1.00" height="5.20" fill="#3a3a3a" transform="rotate(60.0 3.90 10.20)"/><rect x="3.40" y="7.60" width="1.00" height="5.20" fill="#3a3a3a" transform="rotate(120.0 3.90 10.20)"/><rect x="3.40" y="7.60" width="1.00" height="5.20" fill="#3a3a3a" transform="rotate(180.0 3.90 10.20)"/><circle cx="3.90" cy="10.20" r="1.00" fill="#fff"/></svg>
<div class="rl" style="top:716px"></div>
<div class="a td" style="left:58px;top:728px">Packets Sent</div>
<div class="a td" style="left:188px;top:728px;letter-spacing:0.1px">4</div>
<div class="a td" style="left:248px;width:100px;text-align:center;letter-spacing:-0.05px;top:728px">4,644 #</div>
<div class="a td" style="left:377px;width:100px;text-align:center;letter-spacing:-0.05px;top:728px">2.58 #<span style="margin:0 0.9px 0 1.1px">/</span>s</div>
<div class="a td" style="left:514px;width:100px;text-align:right;letter-spacing:-0.05px;top:728px">2.50 #<span style="margin:0 0.9px 0 1.1px">/</span>s</div>
<div class="a td" style="left:644px;width:100px;text-align:right;letter-spacing:-0.05px;top:728px">2.62 #<span style="margin:0 0.9px 0 1.1px">/</span>s</div>
<svg class="a" style="left:809.1px;top:726.0px" width="14" height="14" viewBox="0 0 14 14"><circle cx="9.20" cy="4.80" r="3.60" fill="#3a3a3a"/><rect x="8.55" y="0.60" width="1.30" height="8.40" fill="#3a3a3a" transform="rotate(0.0 9.20 4.80)"/><rect x="8.55" y="0.60" width="1.30" height="8.40" fill="#3a3a3a" transform="rotate(45.0 9.20 4.80)"/><rect x="8.55" y="0.60" width="1.30" height="8.40" fill="#3a3a3a" transform="rotate(90.0 9.20 4.80)"/><rect x="8.55" y="0.60" width="1.30" height="8.40" fill="#3a3a3a" transform="rotate(135.0 9.20 4.80)"/><rect x="8.55" y="0.60" width="1.30" height="8.40" fill="#3a3a3a" transform="rotate(180.0 9.20 4.80)"/><circle cx="9.20" cy="4.80" r="1.85" fill="#fff"/><circle cx="3.90" cy="10.20" r="2.10" fill="#3a3a3a"/><rect x="3.40" y="7.60" width="1.00" height="5.20" fill="#3a3a3a" transform="rotate(0.0 3.90 10.20)"/><rect x="3.40" y="7.60" width="1.00" height="5.20" fill="#3a3a3a" transform="rotate(60.0 3.90 10.20)"/><rect x="3.40" y="7.60" width="1.00" height="5.20" fill="#3a3a3a" transform="rotate(120.0 3.90 10.20)"/><rect x="3.40" y="7.60" width="1.00" height="5.20" fill="#3a3a3a" transform="rotate(180.0 3.90 10.20)"/><circle cx="3.90" cy="10.20" r="1.00" fill="#fff"/></svg>
<div class="rl" style="top:743px"></div>
<div id="frame"></div>
</body></html>
